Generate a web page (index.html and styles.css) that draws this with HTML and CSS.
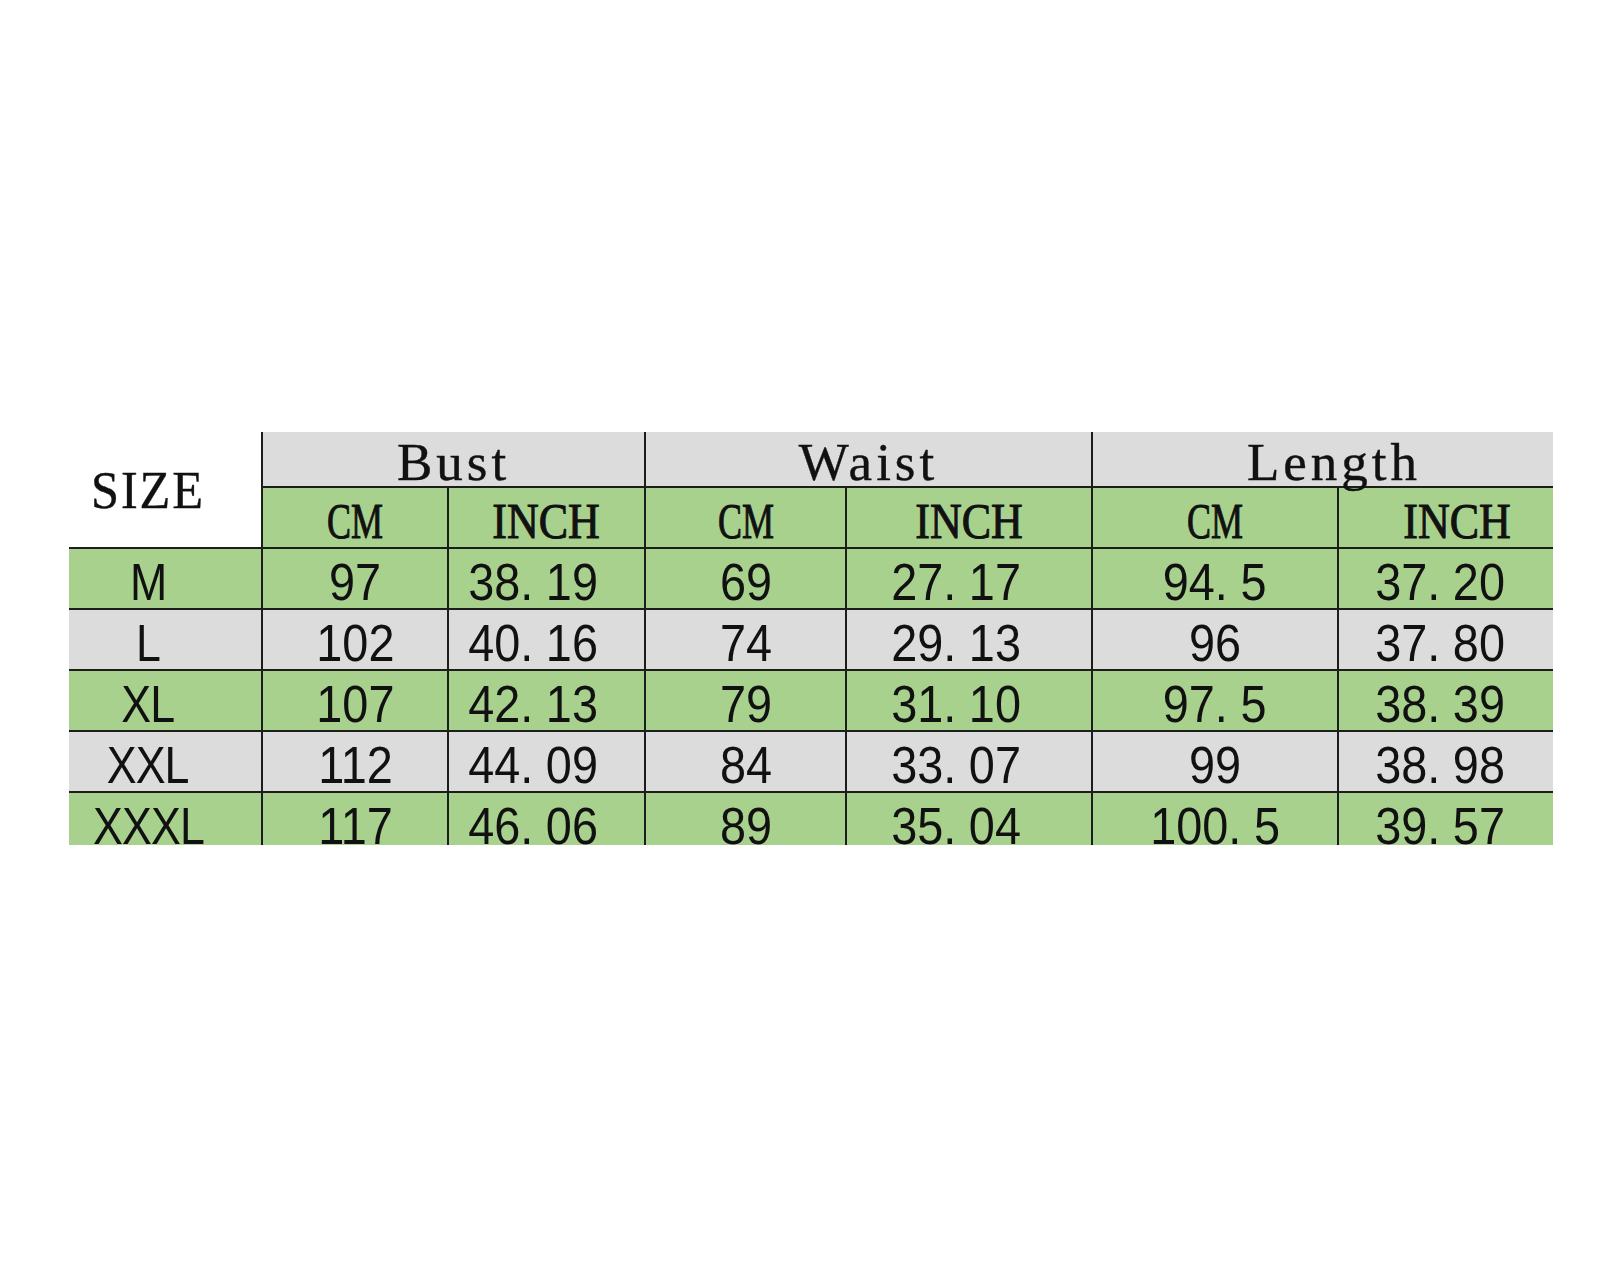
FILE: index.html
```html
<!DOCTYPE html>
<html lang="en">
<head>
<meta charset="utf-8">
<title>Size chart</title>
<link rel="stylesheet" href="styles.css">
</head>
<body>
<div class="sheet">
  <table class="chart">
    <colgroup>
      <col class="c-size">
      <col class="c-bcm">
      <col class="c-binch">
      <col class="c-wcm">
      <col class="c-winch">
      <col class="c-lcm">
      <col class="c-linch">
    </colgroup>
    <tbody>
      <tr class="head1">
        <td class="size-head" rowspan="2"><span class="serif-title size-title">SIZE</span></td>
        <td class="group" colspan="2"><span class="serif-title">Bust</span></td>
        <td class="group" colspan="2"><span class="serif-title">Waist</span></td>
        <td class="group last-group" colspan="2"><span class="serif-title">Length</span></td>
      </tr>
      <tr class="head2 green">
        <td><span class="unit unit-cm">CM</span></td>
        <td><span class="unit unit-inch">INCH</span></td>
        <td><span class="unit unit-cm">CM</span></td>
        <td><span class="unit unit-inch">INCH</span></td>
        <td><span class="unit unit-cm">CM</span></td>
        <td class="last"><span class="unit unit-inch">INCH</span></td>
      </tr>
      <tr class="data green">
        <td class="lbl"><span class="lbl-t">M</span></td>
        <td><span class="num">97</span></td>
        <td class="inch"><span class="num">38<span class="dot">.</span>19</span></td>
        <td><span class="num">69</span></td>
        <td class="inch"><span class="num">27<span class="dot">.</span>17</span></td>
        <td><span class="num">94<span class="dot">.</span>5</span></td>
        <td class="inch last"><span class="num">37<span class="dot">.</span>20</span></td>
      </tr>
      <tr class="data gray">
        <td class="lbl"><span class="lbl-t">L</span></td>
        <td><span class="num">102</span></td>
        <td class="inch"><span class="num">40<span class="dot">.</span>16</span></td>
        <td><span class="num">74</span></td>
        <td class="inch"><span class="num">29<span class="dot">.</span>13</span></td>
        <td><span class="num">96</span></td>
        <td class="inch last"><span class="num">37<span class="dot">.</span>80</span></td>
      </tr>
      <tr class="data green">
        <td class="lbl"><span class="lbl-t">XL</span></td>
        <td><span class="num">107</span></td>
        <td class="inch"><span class="num">42<span class="dot">.</span>13</span></td>
        <td><span class="num">79</span></td>
        <td class="inch"><span class="num">31<span class="dot">.</span>10</span></td>
        <td><span class="num">97<span class="dot">.</span>5</span></td>
        <td class="inch last"><span class="num">38<span class="dot">.</span>39</span></td>
      </tr>
      <tr class="data gray">
        <td class="lbl"><span class="lbl-t">XXL</span></td>
        <td><span class="num">112</span></td>
        <td class="inch"><span class="num">44<span class="dot">.</span>09</span></td>
        <td><span class="num">84</span></td>
        <td class="inch"><span class="num">33<span class="dot">.</span>07</span></td>
        <td><span class="num">99</span></td>
        <td class="inch last"><span class="num">38<span class="dot">.</span>98</span></td>
      </tr>
      <tr class="data green">
        <td class="lbl"><span class="lbl-t">XXXL</span></td>
        <td><span class="num">117</span></td>
        <td class="inch"><span class="num">46<span class="dot">.</span>06</span></td>
        <td><span class="num">89</span></td>
        <td class="inch"><span class="num">35<span class="dot">.</span>04</span></td>
        <td><span class="num">100<span class="dot">.</span>5</span></td>
        <td class="inch last"><span class="num">39<span class="dot">.</span>57</span></td>
      </tr>
    </tbody>
  </table>
</div>
</body>
</html>
```
FILE: styles.css
```css
html, body {
  margin: 0;
  padding: 0;
  background: #ffffff;
}

.sheet {
  margin: 432px 0 0 69px;
  width: 1484px;
  height: 413px;
  overflow: hidden;
}

.chart {
  border-collapse: collapse;
  table-layout: fixed;
  width: 1484px;
  color: #111111;
}

.c-size { width: 193px; }
.c-bcm { width: 186px; }
.c-binch { width: 197px; }
.c-wcm { width: 201px; }
.c-winch { width: 246px; }
.c-lcm { width: 246px; }
.c-linch { width: 215px; }

.chart td {
  padding: 0;
  text-align: center;
  vertical-align: bottom;
  border: 2px solid #1b1e1a;
  white-space: nowrap;
}

.chart td:first-child { border-left: none; }
.chart td.last,
.chart td:last-child { border-right: none; }

.head1 { height: 55px; }
.head1 td {
  border-top: none;
  background: #dcdcdc;
}

.head1 td.size-head {
  background: #ffffff;
  vertical-align: middle;
  padding: 0 34px 0 0;
}

.head1 td.last-group { padding-left: 22px; }

.head2 { height: 61px; }

.data { height: 61px; }

.green td { background: #a9d18e; }
.gray td { background: #dcdcdc; }

.serif-title {
  font-family: "Liberation Serif", "Times New Roman", serif;
  font-size: 53px;
  line-height: 46px;
  letter-spacing: 4px;
  display: inline-block;
  -webkit-text-stroke: 0.4px #111111;
}

.size-title {
  letter-spacing: 2px;
  transform: scaleX(0.95);
  padding-top: 1px;
}

.head1 .group .serif-title { padding-bottom: 1px; }

.unit {
  display: inline-block;
  font-family: "Liberation Serif", "Times New Roman", serif;
  font-size: 50px;
  line-height: 50px;
  padding-bottom: 1px;
  -webkit-text-stroke: 1px #111111;
}

.unit-cm { transform: scaleX(0.72); }
.unit-inch { transform: scaleX(0.88); }

.head2 td.last { padding-left: 22px; }

.data td {
  font-family: "Liberation Sans", Arial, sans-serif;
  font-size: 52px;
  line-height: 52px;
  padding-bottom: 0;
}

.num {
  display: inline-block;
  transform: scaleX(0.9);
}

.data td.inch { padding-right: 26px; }
.data td.inch.last { padding-right: 12px; padding-left: 0; }

.data td.lbl { padding-right: 34px; }

.lbl-t {
  display: inline-block;
  transform: scaleX(0.86);
  letter-spacing: -1px;
}

.dot { margin-right: 14px; }
```
